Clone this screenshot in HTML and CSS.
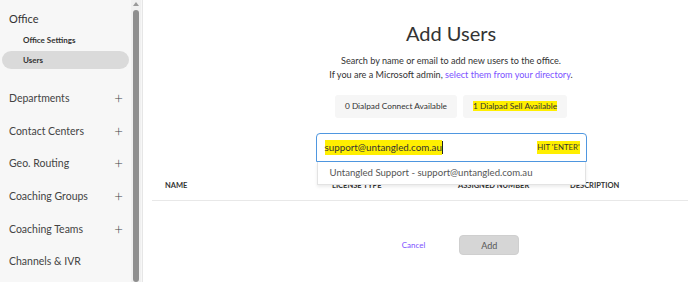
FILE: index.html
```html
<!DOCTYPE html>
<html lang="en">
<head>
    <meta charset="UTF-8">
    <meta name="viewport" content="width=device-width, initial-scale=1.0">
    <title>Add Users</title>
    <link rel="stylesheet" href="styles.css">
</head>
<body>
    <!-- Sidebar -->
    <div class="sidebar">
        <div class="nav">
            <div class="nav-title">Office</div>
            <div class="nav-sub">Office Settings</div>
            <div class="nav-sub active">Users</div>

            <div class="nav-group first">Departments <span class="plus">+</span></div>
            <div class="nav-group">Contact Centers <span class="plus">+</span></div>
            <div class="nav-group">Geo. Routing <span class="plus">+</span></div>
            <div class="nav-group">Coaching Groups <span class="plus">+</span></div>
            <div class="nav-group">Coaching Teams <span class="plus">+</span></div>
            <div class="nav-group">Channels &amp; IVR</div>
        </div>
        <div class="scrollbar">
            <span class="arrow"></span>
            <span class="thumb"></span>
        </div>
    </div>

    <!-- Main -->
    <div class="main">
        <h1>Add Users</h1>
        <p class="intro">
            Search by name or email to add new users to the office.<br>
            If you are a Microsoft admin, <a href="#">select them from your directory</a>.
        </p>

        <div class="licenses">
            <div class="license">0 Dialpad Connect Available</div>
            <div class="license"><span class="mark">1 Dialpad Sell Available</span></div>
        </div>

        <div class="search">
            <div class="search-box">
                <span class="mark">support@untangled.com.au</span><span class="caret"></span>
                <span class="hint mark">HIT 'ENTER'</span>
            </div>
            <div class="suggest">Untangled Support - support@untangled.com.au</div>
        </div>

        <div class="table-head">
            <div class="col col-name">NAME</div>
            <div class="col col-license">LICENSE TYPE</div>
            <div class="col col-number">ASSIGNED NUMBER</div>
            <div class="col col-desc">DESCRIPTION</div>
        </div>

        <div class="actions">
            <a href="#" class="cancel">Cancel</a>
            <button class="add-btn">Add</button>
        </div>
    </div>
</body>
</html>
```

FILE: styles.css
```css
body {
    font-family: 'Lato', 'Open Sans', sans-serif;
    margin: 0;
    padding: 0;
    height: 282px;
    overflow: hidden;
    display: flex;
    background-color: #fff;
    color: #333;
}

/* Sidebar */
.sidebar {
    width: 143px;
    flex: none;
    display: flex;
    background-color: #f7f7f7;
    border-right: 1px solid #e6e6e6;
    box-sizing: border-box;
}

.nav {
    width: 131px;
    padding-top: 8px;
}

.nav-title {
    font-size: 11px;
    padding-left: 9px;
    height: 21px;
    line-height: 21px;
}

.nav-sub {
    font-size: 8px;
    font-weight: 700;
    padding-left: 21px;
    margin: 2px 2px 0 2px;
    height: 18px;
    line-height: 18px;
    border-radius: 9px;
    color: #333;
}

.nav-sub.active {
    background-color: #dadada;
}

.nav-group {
    display: flex;
    justify-content: space-between;
    align-items: center;
    font-size: 10.5px;
    padding: 0 8px 0 9px;
    height: 32.6px;
    color: #444;
}

.nav-group.first {
    margin-top: 13px;
}

.plus {
    font-size: 15px;
    font-weight: 300;
    color: #444;
}

.scrollbar {
    position: relative;
    width: 10px;
    background-color: #f0f0f0;
}

.arrow {
    position: absolute;
    top: 2px;
    left: 2px;
    border-left: 3px solid transparent;
    border-right: 3px solid transparent;
    border-bottom: 4px solid #9a9a9a;
}

.thumb {
    position: absolute;
    top: 10px;
    left: 2px;
    width: 6px;
    height: 272px;
    background-color: #8f8f8f;
    border-radius: 3px;
}

/* Main */
.main {
    flex: none;
    width: 616px;
    text-align: center;
}

h1 {
    font-size: 20px;
    font-weight: 400;
    margin: 20px 0 0;
    height: 26px;
    line-height: 26px;
    color: #333;
}

.intro {
    font-size: 9.1px;
    line-height: 14px;
    margin: 8px 0 0;
}

.intro a {
    color: #7c52ff;
    text-decoration: none;
}

.licenses {
    display: flex;
    justify-content: center;
    gap: 6px;
    margin-top: 13px;
}

.license {
    background-color: #f6f6f6;
    border-radius: 3px;
    font-size: 8.3px;
    height: 23px;
    line-height: 23px;
    padding: 0 10px;
}

.mark {
    background-color: #ffef00;
}

.search {
    position: relative;
    width: 271px;
    margin: 15px auto 0;
    text-align: left;
    z-index: 1;
}

.search-box {
    display: flex;
    align-items: center;
    height: 29px;
    box-sizing: border-box;
    border: 1px solid #4f97e0;
    border-radius: 4px 4px 0 0;
    padding: 0 6px 0 8px;
    font-size: 9.8px;
}

.search-box .mark {
    line-height: 15px;
}

.caret {
    width: 1px;
    height: 13px;
    background-color: #222;
}

.hint {
    margin-left: auto;
    font-size: 7.8px;
}

.search-box .hint {
    line-height: 13px;
}

.suggest {
    position: absolute;
    left: 1px;
    right: 1px;
    top: 29px;
    height: 23px;
    line-height: 21px;
    padding-left: 12px;
    background-color: #fff;
    border: 1px solid #e3e3e3;
    border-top: none;
    box-shadow: 0 2px 3px rgba(0, 0, 0, 0.08);
    font-size: 9.6px;
    color: #555;
    box-sizing: border-box;
}

.table-head {
    display: flex;
    margin: 13px 0 0 9px;
    height: 26px;
    line-height: 22px;
    box-sizing: border-box;
    border-bottom: 1px solid #e8e8e8;
    text-align: left;
    font-size: 7.5px;
    font-weight: 700;
    color: #333;
}

.col-name {
    width: 167px;
    padding-left: 13px;
}

.col-license {
    width: 126px;
}

.col-number {
    width: 112px;
}

.actions {
    display: flex;
    justify-content: center;
    align-items: center;
    gap: 34px;
    margin-top: 34px;
    padding-left: 19px;
}

.cancel {
    color: #7c52ff;
    font-size: 8px;
    text-decoration: none;
}

.add-btn {
    width: 60px;
    height: 20px;
    background-color: #d6d6d6;
    color: #555;
    border: 1px solid #cfcfcf;
    border-radius: 4px;
    font-family: inherit;
    font-size: 9px;
}
```
